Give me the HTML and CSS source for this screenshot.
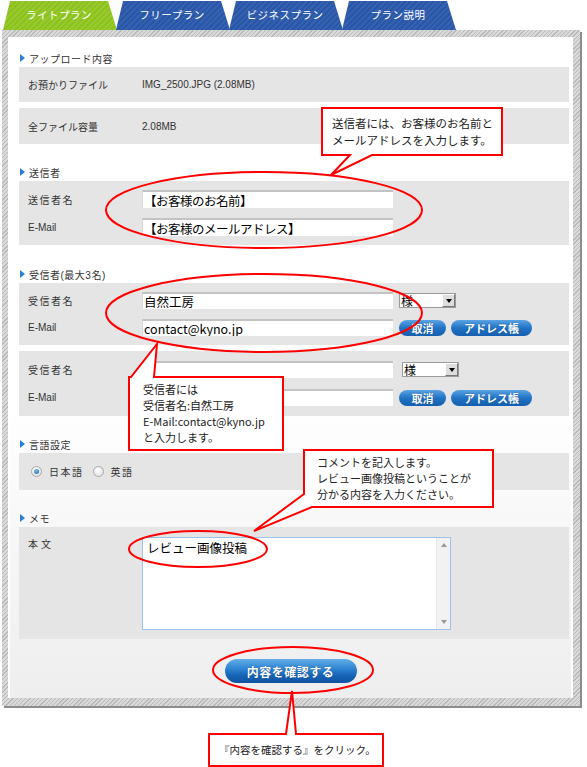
FILE: index.html
```html
<!DOCTYPE html>
<html lang="ja">
<head>
    <meta charset="UTF-8">
    <meta name="viewport" content="width=device-width, initial-scale=1.0">
    <title>ファイル送信</title>
    <link rel="stylesheet" href="styles.css">
</head>
<body>
    <div class="page">
        <ul class="tabs">
            <li class="tab tab-lite">ライトプラン</li>
            <li class="tab">フリープラン</li>
            <li class="tab">ビジネスプラン</li>
            <li class="tab">プラン説明</li>
        </ul>

        <div class="frame">
            <form class="panel">
                <div class="section first">
                    <h2 class="section-title">アップロード内容</h2>
                    <div class="box row"><span class="label">お預かりファイル</span><span class="value">IMG_2500.JPG (2.08MB)</span></div>
                    <div class="box row tall"><span class="label">全ファイル容量</span><span class="value">2.08MB</span></div>
                </div>

                <div class="section">
                    <h2 class="section-title">送信者</h2>
                    <div class="box fields sender">
                        <div class="field"><span class="label spaced">送信者名</span><input class="text" type="text" value="【お客様のお名前】"></div>
                        <div class="field"><span class="label">E-Mail</span><input class="text" type="text" value="【お客様のメールアドレス】"></div>
                    </div>
                </div>

                <div class="section receivers">
                    <h2 class="section-title">受信者(最大3名)</h2>
                    <div class="box fields">
                        <div class="field">
                            <span class="label spaced">受信者名</span><input class="text" type="text" value="自然工房">
                            <span class="select">様<i class="arrow"></i></span>
                        </div>
                        <div class="field">
                            <span class="label">E-Mail</span><input class="text" type="text" value="contact@kyno.jp">
                            <button type="button" class="pill">取消</button>
                            <button type="button" class="pill wide">アドレス帳</button>
                        </div>
                    </div>
                    <div class="box fields second">
                        <div class="field">
                            <span class="label spaced">受信者名</span><input class="text" type="text" value="">
                            <span class="select shifted">様<i class="arrow"></i></span>
                        </div>
                        <div class="field">
                            <span class="label">E-Mail</span><input class="text" type="text" value="">
                            <button type="button" class="pill">取消</button>
                            <button type="button" class="pill wide">アドレス帳</button>
                        </div>
                    </div>
                </div>

                <div class="section">
                    <h2 class="section-title">言語設定</h2>
                    <div class="box langs">
                        <span class="radio checked"></span><span class="lang">日本語</span>
                        <span class="radio"></span><span class="lang">英語</span>
                    </div>
                </div>

                <div class="section">
                    <h2 class="section-title">メモ</h2>
                    <div class="box memo">
                        <span class="label body-label">本文</span>
                        <div class="textarea">
                            <div class="textarea-text">レビュー画像投稿</div>
                            <div class="scrollbar"><i class="up"></i><i class="down"></i></div>
                        </div>
                    </div>
                </div>

                <div class="submit-row">
                    <button type="button" class="submit">内容を確認する</button>
                </div>
            </form>
        </div>

        <!-- red hand-drawn notes over the form -->
        <svg class="notes" width="587" height="767" viewBox="0 0 587 767">
            <g fill="none" stroke="#f00" stroke-width="2">
                <ellipse cx="264" cy="210" rx="158" ry="38"/>
                <ellipse cx="264" cy="313" rx="158" ry="39"/>
                <ellipse cx="198" cy="549" rx="69" ry="18"/>
                <ellipse cx="293" cy="670" rx="80" ry="23"/>
            </g>
            <g fill="#fff" stroke="#f00" stroke-width="2">
                <path d="M322 108 H502 V155 H372 L331 175 L350 155 H322 Z"/>
                <path d="M129 377 H131 L157 344 L154 377 H283 V450 H129 Z"/>
                <path d="M304 450 H493 V507 H312 L254 531 L304 494 Z"/>
                <path d="M209 734 H286 L292 691 L296 734 H383 V766 H209 Z"/>
            </g>
        </svg>
        <div class="note note-sender">送信者には、お客様のお名前と<br>メールアドレスを入力します。</div>
        <div class="note note-receiver">受信者には<br>受信者名:自然工房<br>E-Mail:contact@kyno.jp<br>と入力します。</div>
        <div class="note note-memo">コメントを記入します。<br>レビュー画像投稿ということが<br>分かる内容を入力ください。</div>
        <div class="note note-submit">『内容を確認する』をクリック。</div>
    </div>
</body>
</html>
```

FILE: styles.css
```css
body {
    margin: 0;
    background: #fff;
    font-family: "Liberation Sans", "Noto Sans CJK JP", sans-serif;
    color: #333;
}
.page {
    position: relative;
    width: 587px;
    height: 767px;
}

/* plan tabs */
.tabs {
    display: flex;
    list-style: none;
    margin: 0;
    padding: 1px 0 0 3px;
    height: 29px;
}
.tab {
    width: 114px;
    height: 29px;
    margin-right: -1px;
    padding-right: 2px;
    box-sizing: border-box;
    clip-path: polygon(7px 0, 105px 0, 114px 29px, 0 29px);
    background: repeating-linear-gradient(135deg, #2a56a8 0 2px, #3561b1 2px 4px);
    color: #fff;
    font-size: 10.5px;
    line-height: 29px;
    text-align: center;
    letter-spacing: 0.5px;
}
.tab-lite {
    background: repeating-linear-gradient(135deg, #8cc21d 0 2px, #98ca30 2px 4px);
}

/* striped outer frame */
.frame {
    margin-left: 2px;
    width: 578px;
    padding: 7px 7px 8px 6px;
    box-sizing: border-box;
    background: repeating-linear-gradient(135deg, #b9b9b9 0 1px, #d9d9d9 1px 3px);
    box-shadow: 2px 2px 0 #8c8c8c;
}
.panel {
    display: block;
    padding: 12px 4px 0 11px;
    background: linear-gradient(#fff, #fff 55%, #eeeeee);
    box-shadow: inset 2px 0 0 #fff, inset -2px 0 0 #fff;
}

.section { margin-top: 19px; }
.section.first { margin-top: 0; }
.receivers { margin-top: 20px; }
.section-title {
    display: flex;
    align-items: center;
    gap: 4px;
    height: 18px;
    margin: 0;
    padding-left: 1px;
    font-size: 10px;
    font-weight: normal;
    color: #333;
    letter-spacing: 0.5px;
}
.section-title::before {
    content: "";
    border-left: 5px solid #2b7fd8;
    border-top: 4px solid transparent;
    border-bottom: 4px solid transparent;
}

.box {
    background: #e5e5e5;
}
.box + .box { margin-top: 6px; }
.row {
    display: flex;
    align-items: center;
    height: 35px;
}
.row.tall { height: 36px; }
.label {
    width: 114px;
    padding-left: 9px;
    flex: none;
    font-size: 10px;
    color: #333;
}
.label.spaced { letter-spacing: 1.5px; }
.value {
    font-size: 10px;
    color: #333;
}

.fields {
    display: flex;
    flex-direction: column;
    gap: 10px;
    padding: 9px 0;
}
.fields.second { padding: 10px 0; gap: 11px; }
.field {
    display: flex;
    align-items: center;
    height: 17px;
}
.sender .field { height: 18px; }
.text {
    width: 251px;
    height: 100%;
    margin: 0;
    padding: 0 0 0 1px;
    box-sizing: border-box;
    border: none;
    border-top: 2px solid #c3c3c3;
    border-left: 1px solid #d8d8d8;
    background: #fff;
    font-family: "Noto Sans CJK JP", sans-serif;
    font-size: 12.5px;
    color: #000;
    outline: none;
}
.sender .text { letter-spacing: -0.5px; }

.select {
    display: flex;
    align-items: center;
    justify-content: space-between;
    width: 57px;
    height: 15px;
    margin-left: 6px;
    box-sizing: border-box;
    border: 1px solid #9a9a9a;
    background: #fff;
    font-family: "Noto Sans CJK JP", sans-serif;
    font-size: 12px;
    line-height: 13px;
    color: #000;
    padding-left: 1px;
}
.select.shifted { margin-left: 9px; }
.arrow {
    width: 13px;
    height: 13px;
    box-sizing: border-box;
    border: 1px solid #fff;
    border-right-color: #777;
    border-bottom-color: #777;
    background: #ddd;
    position: relative;
}
.arrow::after {
    content: "";
    position: absolute;
    left: 3px;
    top: 4px;
    border-top: 4px solid #000;
    border-left: 3px solid transparent;
    border-right: 3px solid transparent;
}

.pill {
    height: 16px;
    width: 47px;
    margin-left: 6px;
    padding: 0;
    border: none;
    border-radius: 8px;
    background: linear-gradient(#5aa3e3, #2073c4 50%, #145fae);
    color: #fff;
    font-family: "Noto Sans CJK JP", sans-serif;
    font-size: 11px;
    font-weight: bold;
    line-height: 16px;
    text-shadow: 0 0 1px #0a3d7a;
}
.pill.wide {
    width: 81px;
    margin-left: 5px;
}

.langs {
    display: flex;
    align-items: center;
    height: 37px;
    padding-left: 12px;
}
.radio {
    width: 11px;
    height: 11px;
    box-sizing: border-box;
    border-radius: 50%;
    border: 1px solid #a8a8a8;
    background: radial-gradient(circle at 40% 35%, #fff, #dcdcdc);
    position: relative;
}
.radio.checked::after {
    content: "";
    position: absolute;
    left: 2px;
    top: 2px;
    width: 5px;
    height: 5px;
    border-radius: 50%;
    background: radial-gradient(circle at 40% 35%, #7fc0f0, #1a5fa8);
}
.lang {
    margin: 0 9px 0 7px;
    font-size: 10px;
    letter-spacing: 1.5px;
    color: #333;
}

.memo {
    display: flex;
    align-items: flex-start;
    padding: 10px 0 9px;
}
.body-label {
    line-height: 16px;
    letter-spacing: 3px;
}
.textarea {
    display: flex;
    width: 309px;
    height: 93px;
    box-sizing: border-box;
    border: 1px solid #9cc3e8;
    background: #fff;
}
.textarea-text {
    flex: 1;
    padding: 1px 4px;
    font-family: "Noto Sans CJK JP", sans-serif;
    font-size: 12.5px;
    line-height: 18px;
    color: #000;
}
.scrollbar {
    display: flex;
    flex-direction: column;
    justify-content: space-between;
    align-items: center;
    width: 14px;
    padding: 5px 0;
    box-sizing: border-box;
    background: #f2f2f2;
    border-left: 1px solid #e6e6e6;
}
.scrollbar .up {
    border-bottom: 4px solid #9a9a9a;
    border-left: 3px solid transparent;
    border-right: 3px solid transparent;
}
.scrollbar .down {
    border-top: 4px solid #9a9a9a;
    border-left: 3px solid transparent;
    border-right: 3px solid transparent;
}

.submit-row {
    display: flex;
    justify-content: center;
    padding: 20px 0 15px;
    margin-left: -7px;
}
.submit {
    width: 132px;
    height: 24px;
    padding: 0;
    border: none;
    border-radius: 12px;
    background: linear-gradient(#62aee8, #2a7fce 45%, #1662b4 70%, #0f52a0);
    color: #fff;
    font-family: "Noto Sans CJK JP", sans-serif;
    font-size: 12px;
    font-weight: bold;
    letter-spacing: 0.5px;
    text-shadow: 0 0 1px #0a3d7a;
}

/* annotation layer */
.notes {
    position: absolute;
    left: 0;
    top: 0;
}
.note {
    position: absolute;
    font-family: "Noto Sans CJK JP", sans-serif;
    font-size: 11px;
    line-height: 16px;
    color: #222;
    white-space: nowrap;
}
.note-sender { left: 332px; top: 115px; font-size: 11.5px; line-height: 17px; }
.note-receiver { left: 143px; top: 381px; }
.note-memo { left: 317px; top: 454px; }
.note-submit { left: 219px; top: 742px; font-size: 10.5px; }
```
